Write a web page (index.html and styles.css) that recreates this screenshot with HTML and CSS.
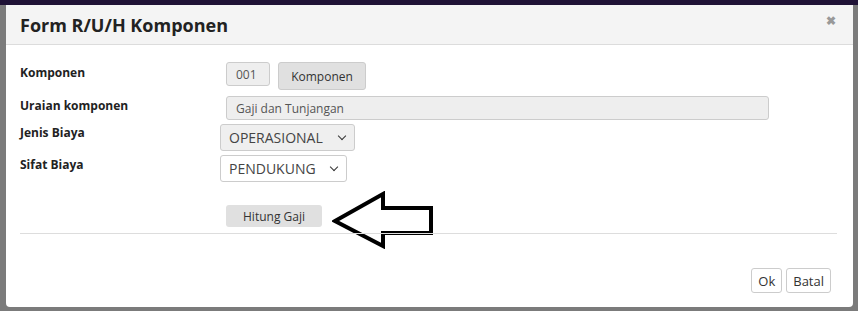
FILE: index.html
```html
<!DOCTYPE html>
<html lang="id">
<head>
  <meta charset="UTF-8">
  <title>Form R/U/H Komponen</title>
  <link rel="stylesheet" href="styles.css">
</head>
<body>
  <div class="topbar"></div>
  <div class="backdrop">
    <div class="modal">
      <div class="modal-header">
        <h4>Form R/U/H Komponen</h4>
        <span class="close">&#x2716;</span>
      </div>
      <div class="modal-body">
        <div class="row row-komp">
          <label>Komponen</label>
          <div class="ctrl">
            <input class="inp-kode" type="text" value="001" readonly>
            <button class="btn btn-komp">Komponen</button>
          </div>
        </div>
        <div class="row row-uraian">
          <label>Uraian komponen</label>
          <div class="ctrl">
            <input class="inp-uraian" type="text" value="Gaji dan Tunjangan" readonly>
          </div>
        </div>
        <div class="row row-jenis">
          <label>Jenis Biaya</label>
          <div class="ctrl sel-ctrl">
            <div class="sel sel-jenis">OPERASIONAL <span class="chev"></span></div>
          </div>
        </div>
        <div class="row row-sifat">
          <label>Sifat Biaya</label>
          <div class="ctrl sel-ctrl">
            <div class="sel sel-sifat">PENDUKUNG <span class="chev"></span></div>
          </div>
        </div>
        <div class="row row-hitung">
          <label></label>
          <div class="ctrl">
            <button class="btn btn-hitung">Hitung Gaji</button>
            <svg class="arrow" width="104" height="58" viewBox="0 0 104 58">
              <path d="M3 30 L51 3 L51 17 L99 17 L99 42 L51 42 L51 55 Z" fill="none" stroke="#000" stroke-width="4" stroke-linejoin="miter"/>
            </svg>
          </div>
        </div>
      </div>
      <div class="modal-footer">
        <button class="btn btn-foot">Ok</button>
        <button class="btn btn-foot">Batal</button>
      </div>
    </div>
  </div>
</body>
</html>
```

FILE: styles.css
```css
body {
  margin: 0;
  background: #7b7b7b;
  font-family: 'Open Sans', 'Liberation Sans', sans-serif;
  color: #333;
  height: 311px;
  overflow: hidden;
}
.topbar {
  height: 5px;
  background: #1f1236;
}
.backdrop {
  padding: 0 5px 0 6px;
}
.modal {
  background: #fff;
  border-radius: 0 0 4px 4px;
  height: 302px;
  display: flex;
  flex-direction: column;
}
.modal-header {
  background: #f4f4f4;
  border-bottom: 1px solid #dcdcdc;
  height: 39px;
  display: flex;
  align-items: center;
  justify-content: space-between;
  padding: 0 17px 0 14px;
}
.modal-header h4 {
  margin: 0;
  font-size: 18px;
  font-weight: bold;
  color: #222;
}
.close {
  color: #999;
  font-size: 12px;
  font-weight: bold;
  margin-top: -8px;
}
.modal-body {
  padding: 17px 16px 0 14px;
}
.row {
  display: flex;
  align-items: flex-start;
}
.row label {
  width: 200px;
  font-size: 12px;
  font-weight: bold;
  color: #222;
  flex: none;
}
.ctrl {
  display: flex;
  gap: 8px;
  padding-left: 6px;
  flex: 1;
}
.sel-ctrl {
  padding-left: 0;
}
.row-komp label { padding-top: 2px; }
.row-uraian { margin-top: 6px; }
.row-uraian label { padding-top: 1px; }
.row-jenis { margin-top: 4px; }
.row-sifat { margin-top: 4px; }
.row-sifat label { padding-top: 1px; }

input {
  font-family: inherit;
  font-size: 12px;
  color: #555;
  background: #eee;
  border: 1px solid #ccc;
  border-radius: 3px;
  padding: 0 9px;
  height: 24px;
  box-sizing: border-box;
  outline: none;
}
.inp-kode {
  width: 44px;
}
.inp-uraian {
  width: 543px;
}
.btn {
  font-family: inherit;
  font-size: 12px;
  color: #333;
  background: #e0e0e0;
  border: 1px solid #ccc;
  border-radius: 3px;
  cursor: pointer;
}
.btn-komp {
  width: 88px;
  height: 28px;
}
.sel {
  display: flex;
  align-items: center;
  justify-content: space-between;
  box-sizing: border-box;
  font-size: 14px;
  color: #444;
  border: 1px solid #ccc;
  border-radius: 3px;
  padding: 0 9px 0 8px;
}
.sel-jenis {
  width: 135px;
  height: 27px;
  background: #efefef;
}
.sel-sifat {
  width: 127px;
  height: 27px;
  background: #fff;
}
.chev {
  width: 5px;
  height: 5px;
  border-right: 1.5px solid #333;
  border-bottom: 1.5px solid #333;
  transform: rotate(45deg);
  margin-top: -4px;
}
.row-hitung {
  margin-top: 22px;
  height: 24px;
  align-items: center;
}
.row-hitung .ctrl {
  align-items: center;
}
.btn-hitung {
  width: 96px;
  height: 22px;
  border: none;
}
.arrow {
  margin-left: 2px;
  margin-top: 8px;
}
.modal-footer {
  margin: 5px 16px 0 14px;
  border-top: 1px solid #ddd;
  flex: 1;
  display: flex;
  justify-content: flex-end;
  align-items: flex-end;
  gap: 4px;
  padding: 0 6px 14px 0;
}
.btn-foot {
  background: #fff;
  font-size: 13px;
  height: 25px;
  padding: 0 6px;
}
```
